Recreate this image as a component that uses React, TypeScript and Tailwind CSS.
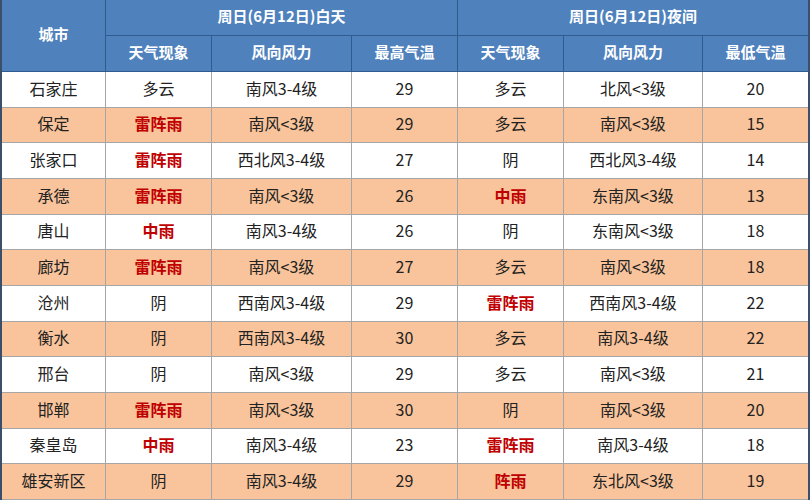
import React from "react";

type Row = {
  city: string;
  dW: string;
  dWind: string;
  hi: string;
  nW: string;
  nWind: string;
  lo: string;
};

const rows: Row[] = [
  { city: "石家庄", dW: "多云", dWind: "南风3-4级", hi: "29", nW: "多云", nWind: "北风<3级", lo: "20" },
  { city: "保定", dW: "雷阵雨", dWind: "南风<3级", hi: "29", nW: "多云", nWind: "南风<3级", lo: "15" },
  { city: "张家口", dW: "雷阵雨", dWind: "西北风3-4级", hi: "27", nW: "阴", nWind: "西北风3-4级", lo: "14" },
  { city: "承德", dW: "雷阵雨", dWind: "南风<3级", hi: "26", nW: "中雨", nWind: "东南风<3级", lo: "13" },
  { city: "唐山", dW: "中雨", dWind: "南风3-4级", hi: "26", nW: "阴", nWind: "东南风<3级", lo: "18" },
  { city: "廊坊", dW: "雷阵雨", dWind: "南风<3级", hi: "27", nW: "多云", nWind: "南风<3级", lo: "18" },
  { city: "沧州", dW: "阴", dWind: "西南风3-4级", hi: "29", nW: "雷阵雨", nWind: "西南风3-4级", lo: "22" },
  { city: "衡水", dW: "阴", dWind: "西南风3-4级", hi: "30", nW: "多云", nWind: "南风3-4级", lo: "22" },
  { city: "邢台", dW: "阴", dWind: "南风<3级", hi: "29", nW: "多云", nWind: "南风<3级", lo: "21" },
  { city: "邯郸", dW: "雷阵雨", dWind: "南风<3级", hi: "30", nW: "阴", nWind: "南风<3级", lo: "20" },
  { city: "秦皇岛", dW: "中雨", dWind: "南风3-4级", hi: "23", nW: "雷阵雨", nWind: "南风3-4级", lo: "18" },
  { city: "雄安新区", dW: "阴", dWind: "南风3-4级", hi: "29", nW: "阵雨", nWind: "东北风<3级", lo: "19" },
];

const isRain = (w: string) => w.includes("雨");

const font = { fontFamily: '"Noto Sans CJK SC", "Noto Sans", sans-serif' };

const hcell = "flex items-center justify-center pb-[2px] border-b border-[#2f5b8f]";

export default function App() {
  return (
    <div className="w-[810px] h-[500px] overflow-hidden bg-white" style={font}>
      <div className="w-[810px] border-l-2 border-r-2 border-[#3b4f6b]">
        <div className="grid grid-cols-[104px_106px_140px_106px_106px_139px_1fr] grid-rows-[36px_36px] bg-[#4f81bd] text-white font-bold text-[15px]">
          <div className={"row-span-2 border-r " + hcell}>城市</div>
          <div className={"col-span-3 border-r " + hcell}>周日(6月12日)白天</div>
          <div className={"col-span-3 " + hcell}>周日(6月12日)夜间</div>
          <div className={"border-r " + hcell}>天气现象</div>
          <div className={"border-r " + hcell}>风向风力</div>
          <div className={"border-r " + hcell}>最高气温</div>
          <div className={"border-r " + hcell}>天气现象</div>
          <div className={"border-r " + hcell}>风向风力</div>
          <div className={hcell}>最低气温</div>
        </div>
        <div className="grid grid-cols-[104px_106px_140px_106px_106px_139px_1fr] auto-rows-[35.67px]">
          {rows.map((r, i) => (
            <div key={r.city} className="contents">
              {[
                { v: r.city },
                { v: r.dW, red: isRain(r.dW) },
                { v: r.dWind },
                { v: r.hi },
                { v: r.nW, red: isRain(r.nW) },
                { v: r.nWind },
                { v: r.lo, last: true },
              ].map((c, j) => (
                <div
                  key={j}
                  className={
                    "flex items-center justify-center pb-[3px] border-b border-[#a6a6a6] text-[16px] leading-none " +
                    (c.last ? "" : "border-r ") +
                    (c.red ? "font-bold text-[#c00000] " : "text-[#222222] ") +
                    (i % 2 === 1 ? "bg-[#f9c49b]" : "bg-white")
                  }
                >
                  {c.v}
                </div>
              ))}
            </div>
          ))}
        </div>
      </div>
    </div>
  );
}
